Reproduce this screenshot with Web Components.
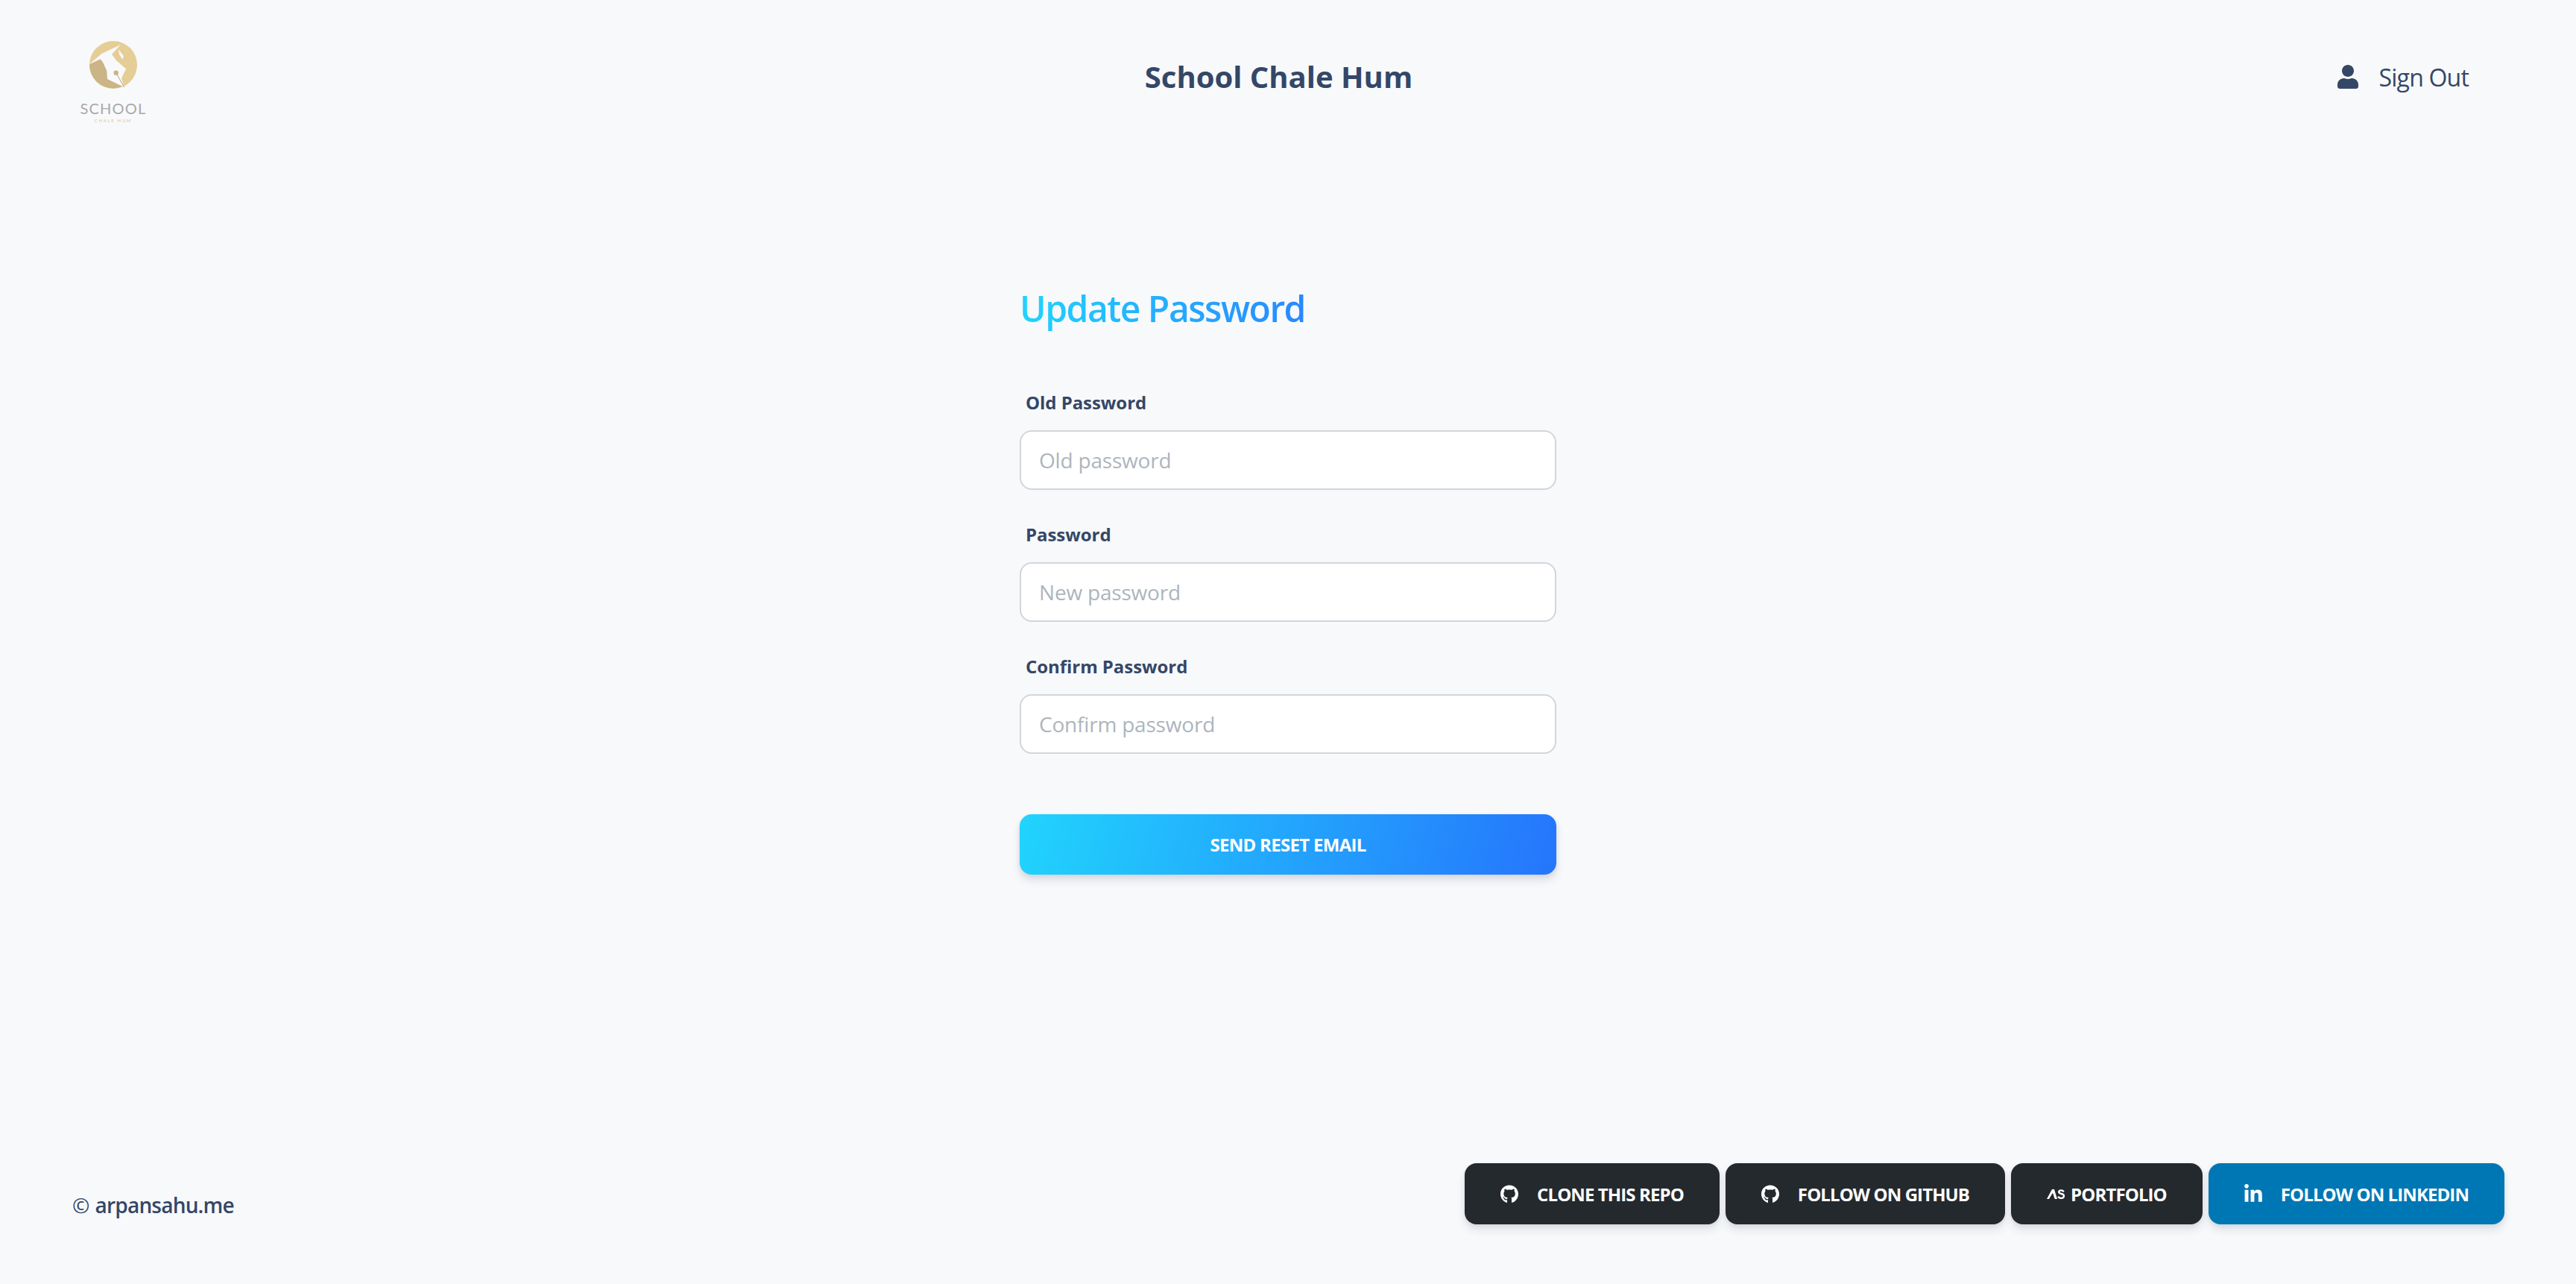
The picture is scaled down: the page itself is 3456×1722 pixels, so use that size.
<!DOCTYPE html>
<html lang="en">
<head>
<meta charset="utf-8">
<title>School Chale Hum</title>
<style>
  html, body { margin: 0; padding: 0; }
  body {
    background: #f8f9fb;
    color: #344767;
    font-family: "Open Sans", "Noto Sans", sans-serif;
  }
</style>
</head>
<body>
<app-shell>
  <app-header slot="header" title="School Chale Hum"></app-header>
  <password-form heading="Update Password">
    <form-field label="Old Password" placeholder="Old password"></form-field>
    <form-field label="Password" placeholder="New password"></form-field>
    <form-field label="Confirm Password" placeholder="Confirm password"></form-field>
    <gradient-button>SEND RESET EMAIL</gradient-button>
  </password-form>
  <app-footer slot="footer">
    <social-button icon="github">CLONE THIS REPO</social-button>
    <social-button icon="github">FOLLOW ON GITHUB</social-button>
    <social-button icon="as">PORTFOLIO</social-button>
    <social-button icon="linkedin" color="#0077b5">FOLLOW ON LINKEDIN</social-button>
  </app-footer>
</app-shell>

<script>
const ICONS = {
  github: `<svg viewBox="0 0 496 512" width="24" height="25" fill="currentColor"><path d="M165.9 397.4c0 2-2.3 3.6-5.2 3.6-3.3 0-5.6-1.6-5.6-3.6 0-2 2.3-3.6 5.2-3.6 3-.3 5.6 1.3 5.6 3.6zm-31.1-4.5c-.7 2 1.3 4.3 4.3 4.9 2.6 1 5.6 0 6.2-2s-1.3-4.3-4.3-5.2c-2.6-.7-5.5.3-6.2 2.3zm44.2-1.7c-2.9.7-4.9 2.6-4.6 4.9.3 2 2.9 3.3 5.9 2.6 2.9-.7 4.9-2.6 4.6-4.6-.3-1.9-3-3.2-5.9-2.9zM244.8 8C106.1 8 0 113.3 0 252c0 110.9 69.8 205.8 169.5 239.2 12.8 2.3 17.3-5.6 17.3-12.1 0-6.2-.3-40.4-.3-61.4 0 0-70 15-84.7-29.8 0 0-11.4-29.1-27.8-36.6 0 0-22.9-15.7 1.6-15.4 0 0 24.9 2 38.6 25.8 21.9 38.6 58.6 27.5 72.9 20.9 2.3-16 8.8-27.1 16-33.7-55.9-6.2-112.3-14.3-112.3-110.5 0-27.5 7.6-41.3 23.6-58.9-2.6-6.5-11.1-33.3 2.6-67.9 20.9-6.5 69 27 69 27 20-5.6 41.5-8.5 62.8-8.5s42.8 2.9 62.8 8.5c0 0 48.1-33.6 69-27 13.7 34.7 5.2 61.4 2.6 67.9 16 17.7 25.8 31.5 25.8 58.9 0 96.5-58.9 104.2-114.8 110.5 9.2 7.9 17 22.9 17 46.4 0 33.7-.3 75.4-.3 83.6 0 6.5 4.6 14.4 17.3 12.1C428.2 457.8 496 362.9 496 252 496 113.3 383.5 8 244.8 8zM97.2 352.9c-1.3 1-1 3.3.7 5.2 1.6 1.6 3.9 2.3 5.2 1 1.3-1 1-3.3-.7-5.2-1.6-1.6-3.9-2.3-5.2-1zm-10.8-8.1c-.7 1.3.3 2.9 2.3 3.9 1.6 1 3.6.7 4.3-.7.7-1.3-.3-2.9-2.3-3.9-2-.6-3.6-.3-4.3.7zm32.4 35.6c-1.6 1.3-1 4.3 1.3 6.2 2.3 2.3 5.2 2.6 6.5 1 1.3-1.3.7-4.3-1.3-6.2-2.2-2.3-5.2-2.6-6.5-1zm-11.4-14.7c-1.6 1-1.6 3.6 0 5.9 1.6 2.3 4.3 3.3 5.6 2.3 1.6-1.3 1.6-3.9 0-6.2-1.4-2.3-4-3.3-5.6-2z"/></svg>`,
  linkedin: `<svg viewBox="0 0 448 512" width="24" height="27" fill="currentColor"><path d="M100.28 448H7.4V148.9h92.88zM53.79 108.1C24.09 108.1 0 83.5 0 53.8a53.79 53.79 0 0 1 107.58 0c0 29.7-24.1 54.3-53.79 54.3zM447.9 448h-92.68V302.4c0-34.7-.7-79.2-48.29-79.2-48.29 0-55.69 37.7-55.69 76.7V448h-92.78V148.9h89.08v40.8h1.3c12.4-23.5 42.69-48.3 87.88-48.3 94 0 111.28 61.9 111.28 142.3V448z"/></svg>`,
  as: `<svg viewBox="0 0 24 13" width="24" height="13" fill="currentColor"><path d="M0 13 7 0h3L14 13h-3.300L8 4.800 3 13Z"/><path d="M22.800 3.300c-.8-1.200-2-1.900-3.500-1.900-1.900 0-3.100 1-3.100 2.300 0 3 6.900 1.600 6.900 5 0 1.900-1.500 3.200-3.700 3.200-1.900 0-3.300-.8-4.300-2.100" fill="none" stroke="currentColor" stroke-width="2.400"/></svg>`,
  user: `<svg viewBox="0 0 448 512" width="28" height="32" fill="currentColor"><path d="M224 256c70.700 0 128-57.300 128-128S294.700 0 224 0 96 57.300 96 128s57.300 128 128 128zm89.600 32h-16.700c-22.200 10.200-46.900 16-72.900 16s-50.600-5.800-72.900-16h-16.700C60.200 288 0 348.200 0 422.400V464c0 26.500 21.500 48 48 48h352c26.500 0 48-21.500 48-48v-41.600c0-74.200-60.200-134.400-134.400-134.400z"/></svg>`
};

class AppShell extends HTMLElement {
  constructor() {
    super();
    this.attachShadow({mode: 'open'}).innerHTML = `
      <style>
        :host { display: flex; flex-direction: column; height: 1722px; box-sizing: border-box; }
        main { flex: 1; display: flex; justify-content: center; }
      </style>
      <slot name="header"></slot>
      <main><slot></slot></main>
      <slot name="footer"></slot>
    `;
  }
}

class BrandLogo extends HTMLElement {
  constructor() {
    super();
    this.attachShadow({mode: 'open'}).innerHTML = `
      <style>
        :host { display: flex; flex-direction: column; align-items: center; width: 110px; }
        svg { display: block; }
        .name {
          margin-top: 16px;
          font: 400 20px/20px Lato, sans-serif;
          letter-spacing: 1.2px;
          color: #a8a8a8;
        }
        .tag {
          margin-top: 3px;
          font: 400 6px/7px Lato, sans-serif;
          letter-spacing: 1.7px;
          color: #dcc592;
        }
      </style>
      <svg viewBox="0 0 64 64" width="64" height="64">
        <circle cx="32" cy="32" r="32" fill="#e5cd96"/>
        <path d="M0 31 14.700 24.300 18 28.300 23.300 40 24 51 46 60A32 32 0 0 1 0 31Z" fill="#cbb485"/>
        <path d="M0 31 16.700 16.700 41.700 5 30 17.700 35.700 25.700 49 37.300 43 50 46.700 62 24 51 23.300 40 18 28.300 14.700 24.300Z" fill="#f8f9fb"/>
        <path d="M39 11 45.700 20 44.700 25 40 18Z" fill="#f8f9fb"/>
        <circle cx="35.700" cy="42.700" r="3.200" fill="#cbb485"/>
        <path d="M35.700 42.700 46.700 62" stroke="#cbb485" stroke-width="1.200"/>
      </svg>
      <div class="name">SCHOOL</div>
      <div class="tag">CHALE HUM</div>
    `;
  }
}

class AppHeader extends HTMLElement {
  constructor() {
    super();
    this.attachShadow({mode: 'open'}).innerHTML = `
      <style>
        :host { display: grid; grid-template-columns: 1fr auto 1fr; align-items: start; padding: 55px 122px 0 97px; height: 200px; box-sizing: border-box; }
        h1 { margin: 22px 0 0; font-size: 40px; line-height: 52px; font-weight: 700; color: #344767; }
        .out { justify-self: end; display: flex; align-items: center; gap: 28px; margin: 22px 22px 0 0; height: 52px; font-size: 32px; letter-spacing: -0.8px; color: #344767; }
      </style>
      <brand-logo></brand-logo>
      <h1></h1>
      <div class="out">${ICONS.user}<span>Sign Out</span></div>
    `;
    this.shadowRoot.querySelector('h1').textContent = this.getAttribute('title');
  }
}

class PasswordForm extends HTMLElement {
  constructor() {
    super();
    this.attachShadow({mode: 'open'}).innerHTML = `
      <style>
        :host { display: block; width: 720px; }
        h2 {
          margin: 181px 0 76px;
          font-size: 48px;
          line-height: 66px;
          font-weight: 600;
          width: max-content;
          letter-spacing: -1.5px;
          background: linear-gradient(87deg, #21d4fd, #2888ff);
          -webkit-background-clip: text;
          background-clip: text;
          color: transparent;
        }
      </style>
      <h2></h2>
      <slot></slot>
    `;
    this.shadowRoot.querySelector('h2').textContent = this.getAttribute('heading');
  }
}

class FormField extends HTMLElement {
  constructor() {
    super();
    this.attachShadow({mode: 'open'}).innerHTML = `
      <style>
        :host { display: block; margin-bottom: 43px; }
        label { display: block; margin: 0 0 20px 8px; font-size: 24px; line-height: 34px; font-weight: 700; letter-spacing: -0.05px; color: #344767; }
        .box {
          display: flex; align-items: center;
          box-sizing: border-box; height: 80px; padding: 0 24px;
          background: #fff; border: 2px solid #d2d6da; border-radius: 16px;
          font-size: 28px; color: #adb5bd; letter-spacing: -0.2px;
        }
      </style>
      <label></label>
      <div class="box" role="textbox"></div>
    `;
    this.shadowRoot.querySelector('label').textContent = this.getAttribute('label');
    this.shadowRoot.querySelector('.box').textContent = this.getAttribute('placeholder');
  }
}

class GradientButton extends HTMLElement {
  constructor() {
    super();
    this.attachShadow({mode: 'open'}).innerHTML = `
      <style>
        :host {
          display: flex; align-items: center; justify-content: center;
          margin-top: 81px; height: 81px;
          border-radius: 16px;
          background: linear-gradient(105deg, #21d4fd, #2575fc);
          box-shadow: 0 8px 12px rgba(50,50,93,.12), 0 2px 6px rgba(0,0,0,.08);
          color: #fff; font-size: 24px; font-weight: 700; letter-spacing: -0.7px;
        }
      </style>
      <slot></slot>
    `;
  }
}

class AppFooter extends HTMLElement {
  constructor() {
    super();
    this.attachShadow({mode: 'open'}).innerHTML = `
      <style>
        :host { display: flex; justify-content: space-between; align-items: flex-start; padding: 0 96px 80px 97px; }
        .copy { margin-top: 36px; font-size: 28px; line-height: 40px; color: #344767; }
        .copy b { font-weight: 600; letter-spacing: -0.8px; }
        .links { display: flex; gap: 8px; }
      </style>
      <div class="copy">© <b>arpansahu.me</b></div>
      <div class="links"><slot></slot></div>
    `;
  }
}

class SocialButton extends HTMLElement {
  constructor() {
    super();
    let icon = this.getAttribute('icon');
    let color = this.getAttribute('color') || '#24292e';
    this.attachShadow({mode: 'open'}).innerHTML = `
      <style>
        :host {
          display: flex; align-items: center; gap: ${icon === 'as' ? 8 : 25}px;
          box-sizing: border-box; height: 82px; padding: 0 48px;
          border-radius: 16px;
          background: ${color};
          box-shadow: 0 8px 12px rgba(50,50,93,.1), 0 2px 6px rgba(0,0,0,.08);
          color: #fff; font-size: 24px; font-weight: 700; letter-spacing: -0.9px; white-space: nowrap;
        }
        svg { display: block; }
      </style>
      ${ICONS[icon]}<slot></slot>
    `;
  }
}

customElements.define('app-shell', AppShell);
customElements.define('brand-logo', BrandLogo);
customElements.define('app-header', AppHeader);
customElements.define('password-form', PasswordForm);
customElements.define('form-field', FormField);
customElements.define('gradient-button', GradientButton);
customElements.define('app-footer', AppFooter);
customElements.define('social-button', SocialButton);
</script>
</body>
</html>
